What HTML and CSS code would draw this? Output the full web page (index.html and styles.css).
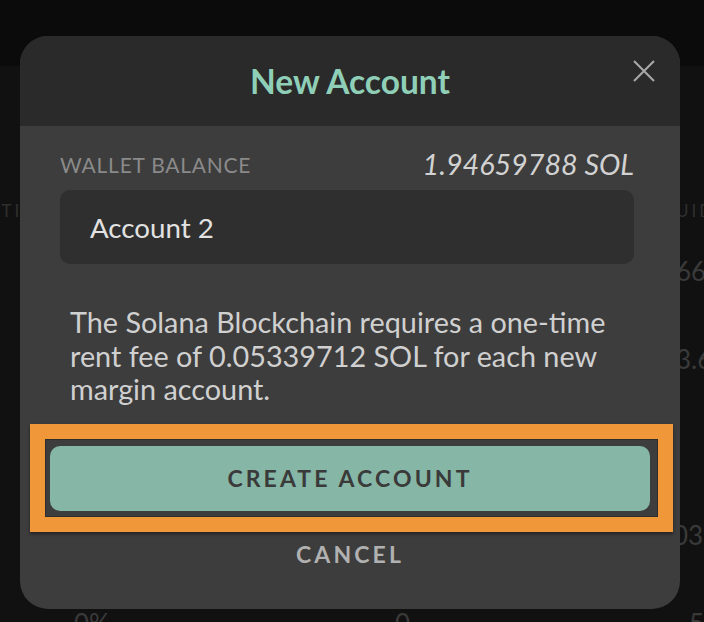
FILE: index.html
```html
<!DOCTYPE html>
<html lang="en">
<head>
<meta charset="utf-8">
<title>New Account</title>
<link rel="stylesheet" href="styles.css">
</head>
<body>
<div class="page">
  <div class="topbar"></div>
  <div class="table">
    <div class="row head">
      <span class="c1 h1">ACTION</span>
      <span class="c2"></span>
      <span class="c3 h3">UIDITY</span>
    </div>
    <div class="row"><span class="c1"></span><span class="c2"></span><span class="c3">66.1</span></div>
    <div class="row"><span class="c1"></span><span class="c2"></span><span class="c3">3.6x</span></div>
    <div class="row"><span class="c1"></span><span class="c2"></span><span class="c3"></span></div>
    <div class="row"><span class="c1"></span><span class="c2"></span><span class="c3 n4">03.2</span></div>
    <div class="row"><span class="c1 b1">0%</span><span class="c2 b2">0</span><span class="c3 b3">5</span></div>
  </div>

  <div class="modal">
    <div class="modal-header">
      <h1 class="title">New Account</h1>
      <button class="close" aria-label="Close">
        <svg width="22" height="22" viewBox="0 0 22 22"><path d="M1 1 L21 21 M21 1 L1 21" stroke="#a9a9a9" stroke-width="2" fill="none"/></svg>
      </button>
    </div>
    <div class="modal-body">
      <div class="balance-row">
        <span class="label">WALLET BALANCE</span>
        <span class="balance">1.94659788 SOL</span>
      </div>
      <div class="input">Account 2</div>
      <p class="note">The Solana Blockchain requires a one-time rent fee of 0.05339712 SOL for each new margin account.</p>
      <div class="btn-wrap">
        <button class="primary">CREATE ACCOUNT</button>
        <div class="highlight"></div>
      </div>
      <button class="cancel">CANCEL</button>
    </div>
  </div>
</div>
</body>
</html>
```

FILE: styles.css
```css
* { box-sizing: border-box; }
html, body { margin: 0; padding: 0; }
body {
  background: #111111;
  font-family: Lato, "Open Sans", sans-serif;
  width: 704px;
  height: 622px;
  overflow: hidden;
}
.page { position: relative; width: 704px; height: 622px; overflow: hidden; }
.topbar { height: 66px; background: #0b0b0b; }

.table { padding-top: 127px; }
.row {
  display: flex;
  align-items: center;
  height: 88px;
  color: #3a3a3a;
  font-size: 26px;
  white-space: nowrap;
}
.row.head { height: 34px; font-size: 17px; letter-spacing: 3px; color: #2f2f2f; }
.c1 { width: 340px; flex: none; }
.c2 { width: 336px; flex: none; }
.c3 { flex: none; }
.h1 { margin-left: -27px; width: 367px; }
.h3 { margin-left: 0; }
.b1 { margin-left: 74px; width: 266px; }
.b2 { margin-left: 55px; width: 281px; }
.b3 { margin-left: 13px; }
.n4 { margin-left: -3px; }

.modal {
  position: absolute;
  left: 20px;
  top: 36px;
  width: 660px;
  border-radius: 28px;
  overflow: hidden;
  background: #3d3d3d;
}
.modal-header {
  position: relative;
  height: 90px;
  background: #2a2a2a;
  display: flex;
  align-items: center;
  justify-content: center;
}
.title {
  margin: 0;
  font-size: 33.5px;
  font-weight: 700;
  color: #8fcfb8;
}
.close {
  position: absolute;
  right: 25px;
  top: 24px;
  width: 22px;
  height: 22px;
  padding: 0;
  border: 0;
  background: none;
  display: flex;
}

.modal-body {
  padding: 20px 30px 40px 30px;
  display: flex;
  flex-direction: column;
}
.balance-row {
  display: flex;
  justify-content: space-between;
  align-items: center;
  height: 36px;
  margin: 0 16px 0 10px;
}
.label {
  font-size: 21px;
  letter-spacing: 0.75px;
  color: #8a8a8a;
}
.balance {
  font-size: 28.7px;
  font-style: italic;
  color: #d2d2d2;
}
.input {
  margin: 8px 16px 0 10px;
  height: 74px;
  border-radius: 10px;
  background: #2f2f2f;
  color: #e2e2e2;
  font-size: 27.7px;
  display: flex;
  align-items: center;
  padding-left: 30px;
}
.note {
  margin: 42px 16px 0 20px;
  font-size: 28.8px;
  line-height: 33.5px;
  color: #d0d0d0;
}
.btn-wrap {
  position: relative;
  margin-top: 39px;
}
.primary {
  width: 100%;
  height: 65px;
  border: 0;
  border-radius: 10px;
  background: #86b6a5;
  color: #3a3a3a;
  font-family: Lato, sans-serif;
  font-size: 23px;
  font-weight: 700;
  letter-spacing: 3.1px;
  display: block;
}
.highlight {
  position: absolute;
  top: -22px;
  bottom: -21px;
  left: -20px;
  right: -23px;
  border: 15px solid #f0973a;
  box-shadow: 0 2px 3px rgba(0,0,0,0.45), inset 0 0 0 1px rgba(0,0,0,0.25);
  pointer-events: none;
}
.cancel {
  margin-top: 28px;
  height: 30px;
  border: 0;
  background: none;
  color: #b1b1b1;
  font-family: Lato, sans-serif;
  font-size: 23px;
  font-weight: 700;
  letter-spacing: 3.1px;
  padding: 0;
  align-self: center;
}
```
